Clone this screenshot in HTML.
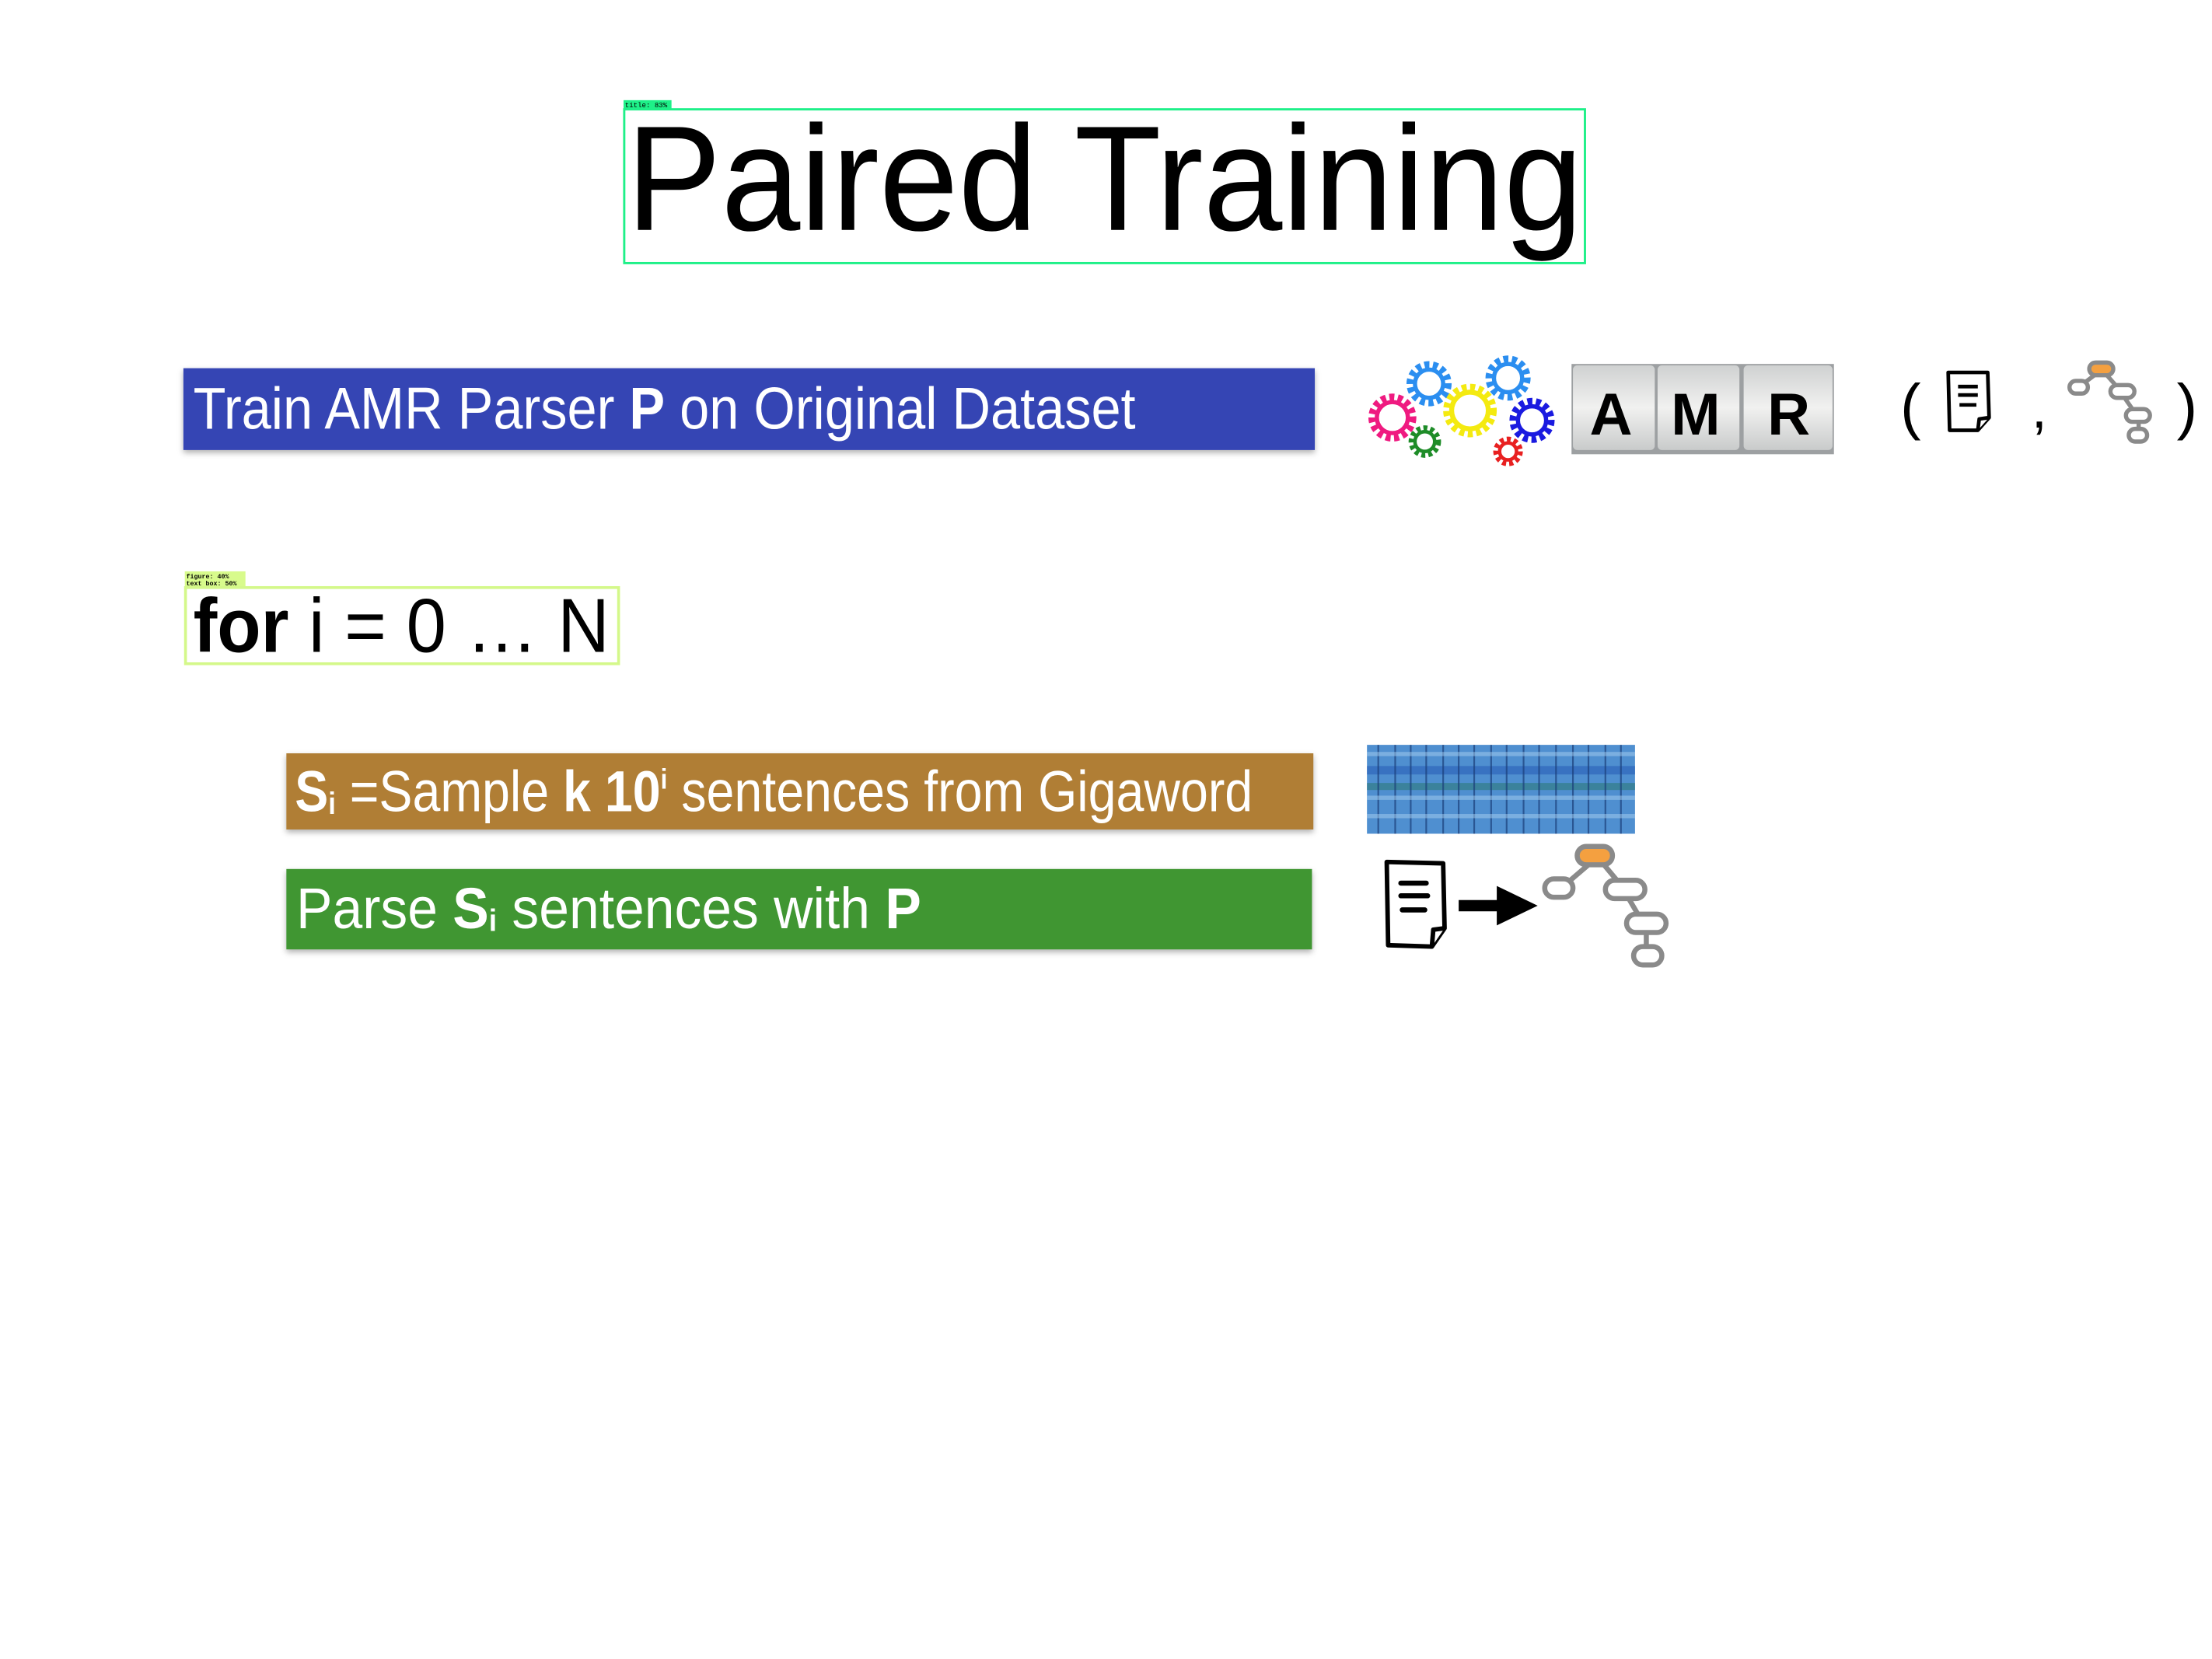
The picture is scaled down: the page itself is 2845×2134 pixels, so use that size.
<!DOCTYPE html>
<html><head><meta charset="utf-8"><style>html,body{margin:0;padding:0;background:#fff}svg{display:block}</style></head>
<body>
<svg width="2845" height="2134" viewBox="0 0 1568 1176" preserveAspectRatio="none" xmlns="http://www.w3.org/2000/svg" font-family="Liberation Sans, sans-serif">
<defs>
<filter id="sh" x="-5%" y="-20%" width="110%" height="150%"><feDropShadow dx="0" dy="2" stdDeviation="2" flood-color="#000" flood-opacity="0.3"/></filter>
<linearGradient id="tile" x1="0" y1="0" x2="0" y2="1"><stop offset="0" stop-color="#cfd1d1"/><stop offset="0.5" stop-color="#f1f1f0"/><stop offset="1" stop-color="#c9cbcb"/></linearGradient>
</defs>
<!-- title -->
<rect x="442" y="71" width="34" height="6" fill="#1ef088"/>
<text x="443" y="76" font-size="5" font-family="Liberation Mono, monospace" fill="#000">title: 83%</text>
<rect x="442.5" y="77.5" width="681" height="109" fill="none" stroke="#1ef088" stroke-width="1.6"/>
<text x="444" y="163" font-size="106" textLength="678" lengthAdjust="spacingAndGlyphs" fill="#000">Paired Training</text>

<!-- blue bar -->
<rect x="130" y="261" width="802" height="58" fill="#3444b4" filter="url(#sh)"/>
<text x="137" y="304" font-size="42" fill="#fff" textLength="668" lengthAdjust="spacingAndGlyphs">Train AMR Parser <tspan font-weight="bold">P</tspan> on Original Dataset</text>

<!-- gears -->
<g fill="none" stroke-width="4.5" transform="translate(6,-1)">
<circle cx="1007" cy="273" r="13" stroke="#2b8ef0" stroke-dasharray="3.4 2.4" stroke-width="6"/><circle cx="1007" cy="273" r="10" stroke="#2b8ef0" stroke-width="3"/>
<circle cx="1063" cy="269" r="13" stroke="#2b8ef0" stroke-dasharray="3.4 2.4" stroke-width="6"/><circle cx="1063" cy="269" r="10" stroke="#2b8ef0" stroke-width="3"/>
<circle cx="981" cy="297" r="14" stroke="#ef1a80" stroke-dasharray="3.4 2.4" stroke-width="6"/><circle cx="981" cy="297" r="11" stroke="#ef1a80" stroke-width="3"/>
<circle cx="1036" cy="292" r="16" stroke="#f4ea10" stroke-dasharray="3.4 2.4" stroke-width="6"/><circle cx="1036" cy="292" r="13" stroke="#f4ea10" stroke-width="3.5"/>
<circle cx="1080" cy="299" r="13" stroke="#1a1ae0" stroke-dasharray="3.4 2.4" stroke-width="6"/><circle cx="1080" cy="299" r="10" stroke="#1a1ae0" stroke-width="3"/>
<circle cx="1004" cy="314" r="9" stroke="#1e8c28" stroke-dasharray="2.6 2" stroke-width="5"/><circle cx="1004" cy="314" r="7" stroke="#1e8c28" stroke-width="2.5"/>
<circle cx="1063" cy="321" r="8" stroke="#e82020" stroke-dasharray="2.6 2" stroke-width="5"/><circle cx="1063" cy="321" r="6" stroke="#e82020" stroke-width="2.5"/>
</g>
<!-- AMR tiles -->
<rect x="1114" y="258" width="186" height="64" fill="#9da0a2"/>
<rect x="1115" y="259" width="58" height="60" rx="3" fill="url(#tile)"/>
<rect x="1175" y="259" width="58" height="60" rx="3" fill="url(#tile)"/>
<rect x="1236" y="259" width="63" height="60" rx="3" fill="url(#tile)"/>
<g font-weight="bold" font-size="42" fill="#000" text-anchor="middle">
<text x="1142" y="308">A</text><text x="1202" y="308">M</text><text x="1268" y="308">R</text></g>

<!-- ( doc , tree ) -->
<text x="1347" y="303" font-size="44" fill="#000">(</text>
<g stroke="#000" stroke-width="2.6" fill="#fff" stroke-linejoin="round">
<path d="M1381 264 L1409 264 L1410 296 L1402 305 L1382 305 Z"/>
<path d="M1402 305 L1403 297 L1410 296" fill="#fff"/>
<path d="M1388 274 H1402 M1388 280 H1402 M1389 287 H1401" />
</g>
<text x="1440" y="303" font-size="40" fill="#000">,</text>
<g stroke="#8a8a8a" stroke-width="3" fill="none">
<path d="M1490 262 L1474 274 M1490 262 L1504 278 M1506 282 L1513 292 M1516 297 V305"/>
<rect x="1481" y="257" width="17" height="9" rx="4.5" fill="#f4a040"/>
<rect x="1467" y="270" width="13" height="9" rx="4.5" fill="#fff"/>
<rect x="1496" y="273" width="17" height="9" rx="4.5" fill="#fff"/>
<rect x="1507" y="290" width="17" height="9" rx="4.5" fill="#fff"/>
<rect x="1509" y="304" width="13" height="9" rx="4.5" fill="#fff"/>
</g>
<text x="1543" y="303" font-size="44" fill="#000">)</text>

<!-- for box -->
<rect x="131" y="405" width="43" height="11" fill="#d8fb8c"/>
<text x="132" y="410" font-size="4.6" font-family="Liberation Mono, monospace" font-weight="bold" fill="#000">figure: 40%</text>
<text x="132" y="415" font-size="4.6" font-family="Liberation Mono, monospace" font-weight="bold" fill="#000">text box: 50%</text>
<rect x="131.5" y="416.5" width="307" height="54" fill="none" stroke="#d4f88a" stroke-width="2"/>
<text x="137" y="462" font-size="54" fill="#000" textLength="295" lengthAdjust="spacingAndGlyphs"><tspan font-weight="bold">for</tspan> i = 0 … N</text>

<!-- brown bar -->
<rect x="203" y="534" width="728" height="54" fill="#b07e35" filter="url(#sh)"/>
<text x="209" y="575" font-size="41" fill="#fff" textLength="679" lengthAdjust="spacingAndGlyphs"><tspan font-weight="bold">S</tspan><tspan font-weight="bold" font-size="22" dy="2">i</tspan><tspan dy="-2"> =Sample </tspan><tspan font-weight="bold">k 10</tspan><tspan font-weight="bold" font-size="20" dy="-16">i</tspan><tspan dy="16"> sentences from Gigaword</tspan></text>

<!-- green bar -->
<rect x="203" y="616" width="727" height="57" fill="#3f9632" filter="url(#sh)"/>
<text x="210" y="658" font-size="41" fill="#fff" textLength="443" lengthAdjust="spacingAndGlyphs">Parse <tspan font-weight="bold">S</tspan><tspan font-weight="bold" font-size="22" dy="2">i</tspan><tspan dy="-2"> sentences with </tspan><tspan font-weight="bold">P</tspan></text>

<!-- books -->
<rect x="969" y="528" width="190" height="63" fill="#4f8fd0"/>
<g fill="#2a5fb8" opacity="0.6">
<rect x="969" y="543" width="190" height="6"/><rect x="969" y="555" width="190" height="5" fill="#2e7a7a"/>
</g>
<g stroke="#1b3f7a" stroke-width="1.2" opacity="0.7">
<path d="M977 528V591 M989 528V591 M1000 528V591 M1011 528V591 M1023 528V591 M1034 528V591 M1045 528V591 M1057 528V591 M1068 528V591 M1080 528V591 M1091 528V591 M1103 528V591 M1115 528V591 M1126 528V591 M1138 528V591 M1149 528V591"/>
</g>
<g fill="#a8d0f0" opacity="0.5">
<rect x="969" y="564" width="190" height="3"/><rect x="969" y="577" width="190" height="3"/><rect x="969" y="533" width="190" height="3"/>
</g>

<!-- doc -> tree -->
<g transform="translate(2,0)">
<g stroke="#000" stroke-width="3.2" fill="#fff" stroke-linejoin="round">
<path d="M981 611 L1021 612 L1022 658 L1013 671 L982 670 Z"/>
<path d="M1013 671 L1014 659 L1022 658"/>
</g>
<g stroke="#000" stroke-width="3.6" stroke-linecap="round"><path d="M991 626 H1009 M991 635 H1010 M992 645 H1008"/></g>
<rect x="1032" y="638" width="29" height="8" fill="#000"/>
<path d="M1059 628 L1088 642 L1059 656 Z" fill="#000"/>
</g>
<g stroke="#8a8a8a" stroke-width="3.6" fill="none" transform="translate(4,1)">
<path d="M1122 612 L1108 624 M1133 612 L1143 624 M1150 635 L1157 647 M1163 660 V670"/>
<rect x="1114" y="599" width="25" height="13" rx="6.5" fill="#f4a040"/>
<rect x="1091" y="622" width="20" height="13" rx="6.5" fill="#fff"/>
<rect x="1134" y="623" width="28" height="13" rx="6.5" fill="#fff"/>
<rect x="1149" y="647" width="28" height="13" rx="6.5" fill="#fff"/>
<rect x="1154" y="670" width="20" height="13" rx="6.5" fill="#fff"/>
</g>
</svg>
</body></html>
